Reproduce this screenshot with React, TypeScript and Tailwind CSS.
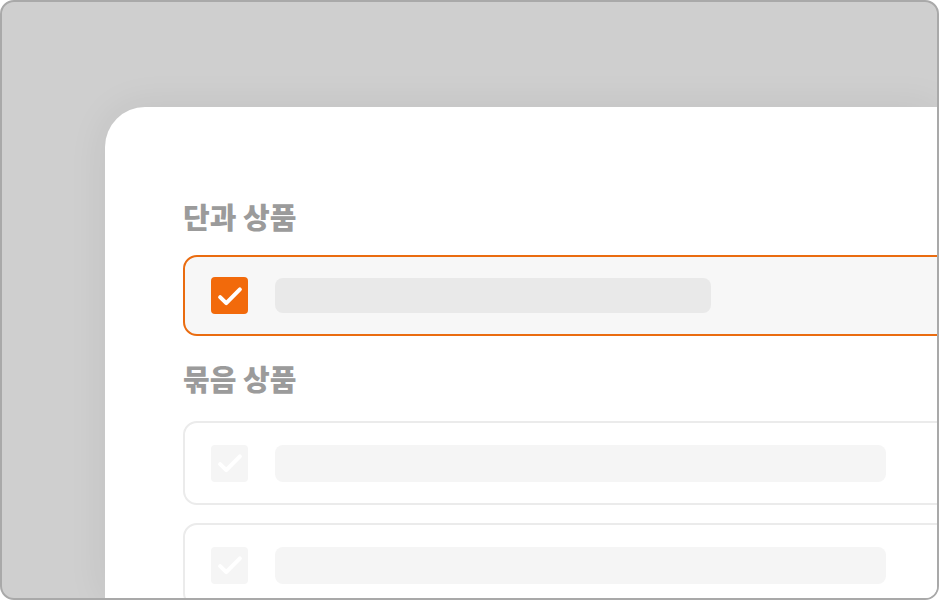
import React from 'react';

const font = { fontFamily: '"Noto Sans CJK KR", "Noto Sans", sans-serif' };

function Check({ color }: { color: string }) {
  return (
    <svg width="32" height="32" viewBox="0 0 24 24" fill="none">
      <path d="M4.6 12.8l4.6 4.6L19.4 7" stroke={color} strokeWidth="3" strokeLinecap="round" strokeLinejoin="round" />
    </svg>
  );
}

function ProductRow({ selected, barWidth }: { selected?: boolean; barWidth: string }) {
  if (selected) {
    return (
      <div className="flex items-center w-[820px] h-[81px] rounded-[14px] border-2 border-[#ea6c10] bg-[#f7f7f7] pl-[26px]">
        <div className="flex items-center justify-center w-[37px] h-[37px] rounded-[4px] bg-[#f26a0b]">
          <Check color="#ffffff" />
        </div>
        <div className={`ml-[27px] h-[35px] rounded-[8px] bg-[#e9e9e9] ${barWidth}`} />
      </div>
    );
  }
  return (
    <div className="flex items-center w-[820px] h-[84px] rounded-[14px] border-2 border-[#ebebeb] bg-white pl-[26px]">
      <div className="flex items-center justify-center w-[37px] h-[37px] rounded-[4px] bg-[#f5f5f5]">
        <Check color="#ffffff" />
      </div>
      <div className={`ml-[27px] h-[37px] rounded-[8px] bg-[#f5f5f5] ${barWidth}`} />
    </div>
  );
}

export default function App() {
  return (
    <div className="w-[939px] h-[600px] overflow-hidden rounded-[14px] border-2 border-[#a9a9a9] bg-[#cfcfcf]" style={font}>
      <div className="pt-[105px] pl-[103px] h-full">
        <div className="h-full bg-white rounded-tl-[40px] shadow-[0_0_40px_rgba(0,0,0,0.07)] pl-[78px] pt-[92px]">
          <h2 className="text-[29px] leading-[34px] font-black text-[#9b9b9b]">단과 상품</h2>
          <div className="mt-[22px]">
            <ProductRow selected barWidth="w-[436px]" />
          </div>
          <h2 className="mt-[25px] text-[29px] leading-[34px] font-black text-[#9b9b9b]">묶음 상품</h2>
          <div className="mt-[26px] flex flex-col gap-[18px]">
            <ProductRow barWidth="w-[611px]" />
            <ProductRow barWidth="w-[611px]" />
          </div>
        </div>
      </div>
    </div>
  );
}
